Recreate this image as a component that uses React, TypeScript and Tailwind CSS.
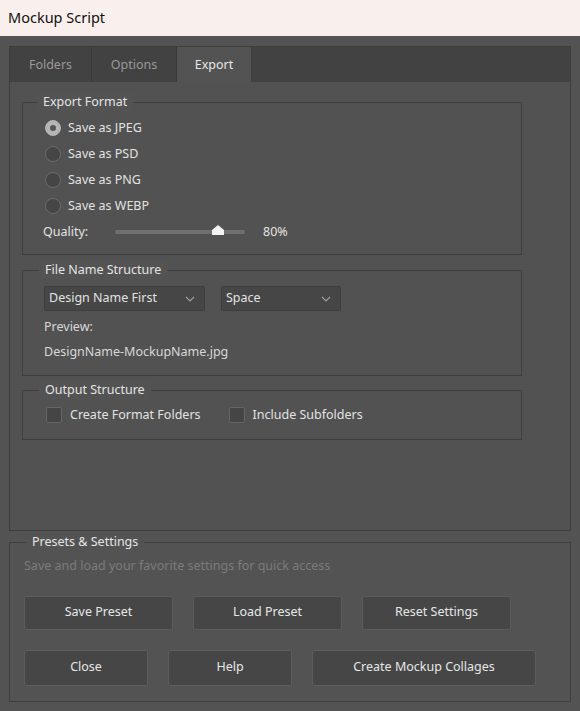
import React from 'react';

const font = { fontFamily: '"Noto Sans", "Open Sans", sans-serif' };

function Group({ title, className, legend, children }: { title: string; className: string; legend: string; children: React.ReactNode }) {
  return (
    <div className={`relative border border-[#3f3f3f] ${className}`}>
      <span className={`absolute -top-[10px] bg-[#535353] px-[6px] text-[12.5px] leading-[18px] text-[#e4e4e4] ${legend}`}>
        {title}
      </span>
      {children}
    </div>
  );
}

function Radio({ label, checked }: { label: string; checked?: boolean }) {
  return (
    <div className="flex h-[26px] items-center">
      <span
        className={`ml-[2px] flex h-[16px] w-[16px] items-center justify-center rounded-full border ${
          checked ? 'border-[#b5b5b5] bg-[#b5b5b5]' : 'border-[#6a6a6a] bg-[#454545]'
        }`}
      >
        {checked && <span className="h-[6px] w-[6px] rounded-full bg-[#555555]" />}
      </span>
      <span className="ml-[7px]">{label}</span>
    </div>
  );
}

function Check({ label, className }: { label: string; className?: string }) {
  return (
    <div className={`flex items-center ${className ?? ''}`}>
      <span className="h-[16px] w-[16px] rounded-[2px] border border-[#666666] bg-[#454545]" />
      <span className="ml-[8px]">{label}</span>
    </div>
  );
}

function Select({ value, width }: { value: string; width: string }) {
  return (
    <div className={`flex h-[25px] items-center justify-between rounded-[2px] border border-[#3e3e3e] bg-[#464646] pl-[4px] pr-[9px] ${width}`}>
      <span>{value}</span>
      <svg width="10" height="6" viewBox="0 0 10 6" fill="none">
        <path d="M1 1l4 4 4-4" stroke="#a0a0a0" strokeWidth="1.1" />
      </svg>
    </div>
  );
}

function Btn({ label, width, height }: { label: string; width: string; height: string }) {
  return (
    <button className={`rounded-[2px] border border-[#5c5c5c] bg-[#464646] text-[12.5px] text-[#e6e6e6] ${width} ${height}`}>
      {label}
    </button>
  );
}

export default function App() {
  return (
    <div className="flex h-[711px] w-[580px] flex-col bg-[#535353] text-[12.5px] text-[#e2e2e2]" style={font}>
      <div className="flex h-[36px] items-center bg-[#f9f0ed] pl-[8px] text-[14.5px] text-[#111]">
        Mockup Script
      </div>

      <div className="mx-[9px] mt-[10px] flex h-[485px] flex-col border border-[#3d3d3d] bg-[#525252]">
        <div className="flex h-[35px] bg-[#424242]">
          <div className="flex w-[82px] items-center justify-center border-r border-[#383838] pt-[1px] text-[#999]">Folders</div>
          <div className="flex w-[85px] items-center justify-center border-r border-[#383838] pt-[1px] text-[#999]">Options</div>
          <div className="flex w-[74px] items-center justify-center bg-[#535353] pt-[1px] text-[#e8e8e8]">Export</div>
        </div>

        <div className="flex flex-col pl-[12px]">
          <Group title="Export Format" legend="left-[14px]" className="mt-[20px] h-[153px] w-[500px] pl-[20px] pt-[12px]">
            <Radio label="Save as JPEG" checked />
            <Radio label="Save as PSD" />
            <Radio label="Save as PNG" />
            <Radio label="Save as WEBP" />
            <div className="flex h-[26px] items-center">
              <span className="w-[72px]">Quality:</span>
              <div className="relative h-[4px] w-[130px] rounded-full bg-[#6f6f6f]">
                <svg className="absolute -top-[5px] left-[97px]" width="12" height="10" viewBox="0 0 12 10">
                  <path d="M6 0L12 5V10H0V5Z" fill="#f2f2f2" />
                </svg>
              </div>
              <span className="ml-[18px]">80%</span>
            </div>
          </Group>

          <Group title="File Name Structure" legend="left-[16px]" className="mt-[15px] h-[106px] w-[500px] pl-[21px] pt-[15px]">
            <div className="flex gap-[16px]">
              <Select value="Design Name First" width="w-[161px]" />
              <Select value="Space" width="w-[120px]" />
            </div>
            <div className="mt-[7px] h-[18px] leading-[18px] text-[#d8d8d8]">Preview:</div>
            <div className="mt-[7px] h-[18px] leading-[18px] text-[#d8d8d8]">DesignName-MockupName.jpg</div>
          </Group>

          <Group title="Output Structure" legend="left-[16px]" className="mt-[14px] flex h-[50px] w-[500px] items-start pl-[23px] pt-[15px]">
            <Check label="Create Format Folders" />
            <Check label="Include Subfolders" className="ml-[28px]" />
          </Group>
        </div>
      </div>

      <Group title="Presets & Settings" legend="left-[16px]" className="mx-[9px] mt-[11px] h-[160px] pl-[14px] pt-[14px]">
        <div className="text-[#7b7b7b]">Save and load your favorite settings for quick access</div>
        <div className="mt-[20px] flex gap-[20px]">
          <Btn label="Save Preset" width="w-[149px]" height="h-[34px]" />
          <Btn label="Load Preset" width="w-[149px]" height="h-[34px]" />
          <Btn label="Reset Settings" width="w-[149px]" height="h-[34px]" />
        </div>
        <div className="mt-[20px] flex gap-[20px]">
          <Btn label="Close" width="w-[124px]" height="h-[36px]" />
          <Btn label="Help" width="w-[124px]" height="h-[36px]" />
          <Btn label="Create Mockup Collages" width="w-[224px]" height="h-[36px]" />
        </div>
      </Group>
    </div>
  );
}
